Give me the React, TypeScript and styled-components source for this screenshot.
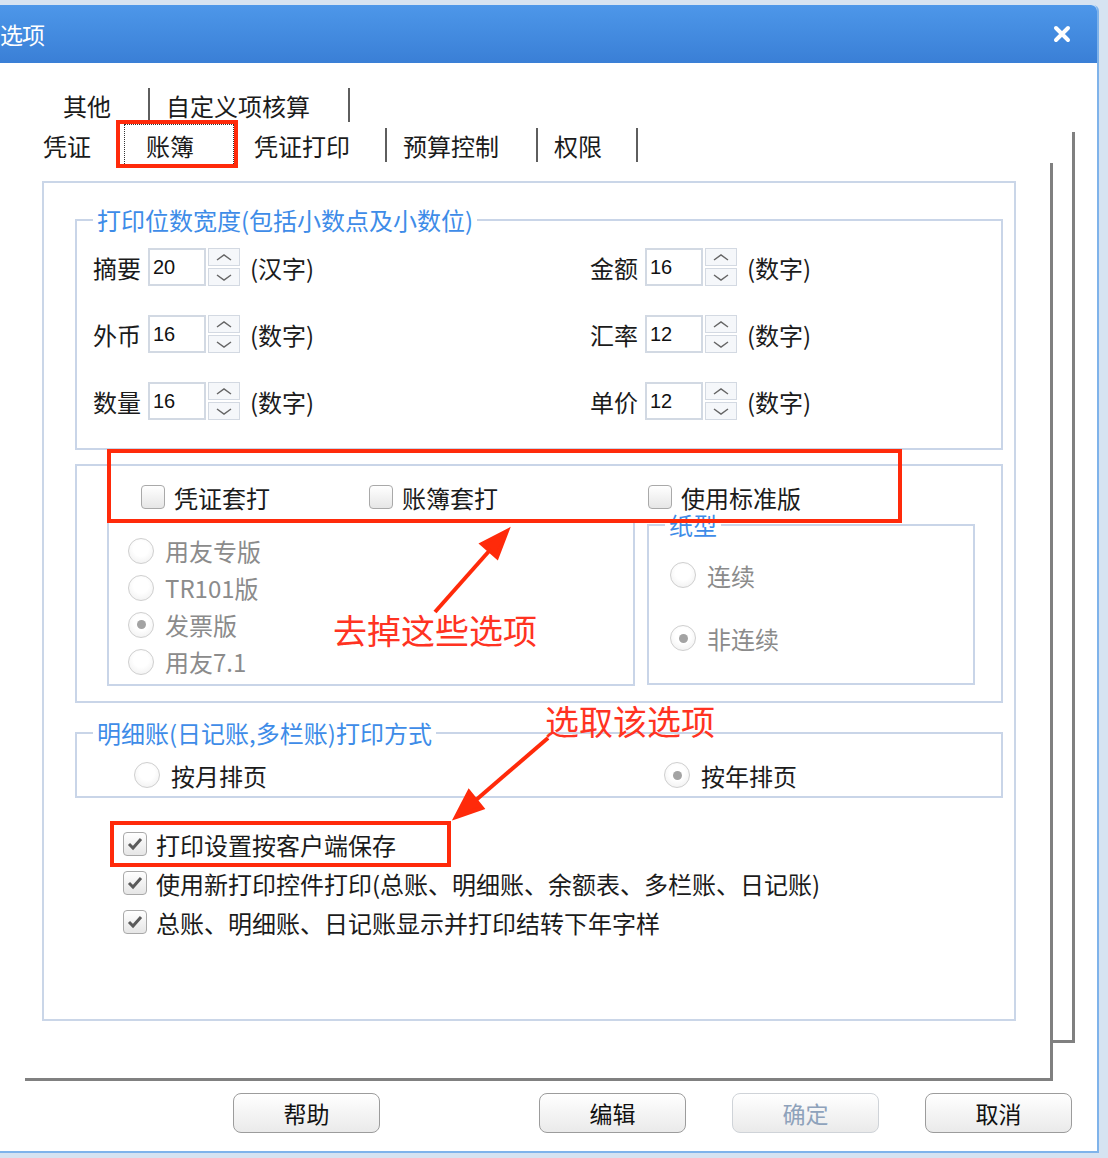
import React from 'react';
import styled, { createGlobalStyle } from 'styled-components';

const GlobalStyle = createGlobalStyle`
  html, body {
    margin: 0;
    padding: 0;
    background: #d6e3f1;
  }
  body {
    font-family: "Noto Sans CJK SC", "Noto Sans", sans-serif;
    color: #1b1b1b;
  }
  * { box-sizing: border-box; }
`;

const Page = styled.div`
  position: relative;
  width: 1108px;
  height: 1158px;
  padding-top: 5px;
  overflow: hidden;
`;

const Dialog = styled.div`
  width: 1099px;
  height: 1148px;
  background: #fff;
  border-right: 2px solid #7fb3ea;
  border-bottom: 2px solid #7fb3ea;
  border-top-right-radius: 6px;
  display: flex;
  flex-direction: column;
`;

const TitleBar = styled.div`
  flex: none;
  height: 58px;
  display: flex;
  align-items: center;
  justify-content: space-between;
  padding-right: 26px;
  background: linear-gradient(#4d97e9, #3a7fd6);
  border-top-right-radius: 6px;
  color: #fff;
  font-size: 23px;
`;

const Title = styled.span`
  margin-left: 0;
  letter-spacing: -1px;
`;

// ---- tabs ----

const TabRow = styled.div<{ $top: number; $left: number }>`
  display: flex;
  align-items: center;
  height: 34px;
  margin-top: ${p => p.$top}px;
  margin-left: ${p => p.$left}px;
  font-size: 24px;
`;

const Tab = styled.div<{ $pl: number; $pr: number; $sep?: boolean }>`
  height: 34px;
  display: flex;
  align-items: center;
  padding: 0 ${p => p.$pr}px 0 ${p => p.$pl}px;
  border-right: 2px solid ${p => (p.$sep ? '#5e5e5e' : 'transparent')};
  white-space: nowrap;
`;

const ActiveTab = styled.div`
  width: 122px;
  height: 48px;
  padding: 3px 6px;
  font-size: 24px;
`;

const FocusRect = styled.div`
  height: 100%;
  display: flex;
  align-items: center;
  padding-left: 21px;
  border: 1px dotted #333;
`;

const FrontFrame = styled.div`
  position: relative;
  width: 1028px;
  height: 918px;
  margin: 1px 0 0 25px;
  padding: 18px 0 0 17px;
  border-right: 3px solid #808080;
  border-bottom: 3px solid #808080;

  &::before {
    content: '';
    position: absolute;
    top: -31px;
    left: calc(100% + 3px);
    width: 19px;
    bottom: 35px;
    border-right: 3px solid #808080;
    border-bottom: 3px solid #808080;
  }
`;

const TabPage = styled.div`
  width: 974px;
  height: 840px;
  border: 2px solid #cad6e8;
  padding: 22px 11px 0 31px;
`;

// ---- group boxes ----

const GroupBox = styled.fieldset<{ $pt: number; $pb: number; $pl?: number; $mt?: number }>`
  margin: ${p => p.$mt ?? 0}px 0 0 0;
  min-width: 0;
  border: 2px solid #c9d5e8;
  padding: ${p => p.$pt}px 12px ${p => p.$pb}px ${p => p.$pl ?? 16}px;
`;

const Legend = styled.legend<{ $ml?: number }>`
  margin-left: ${p => p.$ml ?? 0}px;
  padding: 0 4px;
  font-size: 24px;
  line-height: 30px;
  color: #3e8ce8;
  white-space: nowrap;
`;

const FieldGrid = styled.div`
  display: grid;
  grid-template-columns: 497px 1fr;
  row-gap: 29px;
`;

const Field = styled.div`
  display: flex;
  align-items: center;
  height: 38px;
  font-size: 24px;
`;

const FieldLabel = styled.span`
  width: 48px;
  margin-right: 7px;
  white-space: nowrap;
`;

const NumBox = styled.div`
  width: 58px;
  height: 38px;
  border: 2px solid #d2d9e3;
  padding-left: 3px;
  display: flex;
  align-items: center;
  font-family: "Liberation Sans", Arial, sans-serif;
  font-size: 20px;
  color: #111;
`;

const Spin = styled.div`
  display: flex;
  flex-direction: column;
  gap: 2px;
  width: 32px;
  height: 38px;
  margin-left: 2px;
`;

const SpinHalf = styled.div`
  flex: 1;
  display: flex;
  align-items: center;
  justify-content: center;
  border: 1px solid #d3d9e2;
  background: #f5f7fa;
`;

const Unit = styled.span`
  margin-left: 10px;
  white-space: nowrap;
`;

// ---- options ----

const CheckRow = styled.div`
  display: grid;
  grid-template-columns: 228px 279px auto;
  margin-left: 34px;
  height: 26px;
  align-items: center;
`;

const Option = styled.label<{ $muted?: boolean }>`
  display: flex;
  align-items: center;
  height: 30px;
  font-size: 24px;
  white-space: nowrap;
  color: ${p => (p.$muted ? '#8b8b8b' : '#1b1b1b')};
`;

const Box = styled.span`
  flex: none;
  width: 24px;
  height: 24px;
  margin-right: 9px;
  border: 1.5px solid #a9a9a9;
  border-radius: 4px;
  background: linear-gradient(#ffffff, #e6e6e6);
  display: flex;
  align-items: center;
  justify-content: center;
`;

const Circle = styled.span`
  flex: none;
  width: 26px;
  height: 26px;
  margin-right: 11px;
  border-radius: 50%;
  border: 1.5px solid #cfcfcf;
  background: radial-gradient(circle at 50% 40%, #ffffff 40%, #ececec);
  display: flex;
  align-items: center;
  justify-content: center;
`;

const Dot = styled.span`
  width: 9px;
  height: 9px;
  border-radius: 50%;
  background: #a3a3a3;
`;

const SubRow = styled.div`
  display: flex;
  align-items: flex-start;
  margin-top: 2px;
`;

const VersionBox = styled.div`
  width: 528px;
  height: 166px;
  margin-top: 10px;
  border: 2px solid #c9d5e8;
  padding: 10px 0 0 19px;
  display: grid;
  grid-auto-rows: 37px;
  align-items: center;
`;

const PaperBox = styled.fieldset`
  width: 328px;
  height: 175px;
  margin: 0 0 0 12px;
  min-width: 0;
  border: 2px solid #c9d5e8;
  padding: 20px 12px 0 21px;
  display: flex;
  flex-direction: column;
  gap: 33px;
`;

const PageModeRow = styled.div`
  display: grid;
  grid-template-columns: 530px auto;
  margin-left: 41px;
`;

const CheckList = styled.div`
  display: flex;
  flex-direction: column;
  gap: 9px;
  margin: 31px 0 0 48px;
`;

// ---- buttons ----

const ButtonRow = styled.div`
  display: flex;
  gap: 46px;
  margin-top: 12px;
  padding: 0 25px 0 233px;
`;

const Button = styled.button<{ $disabled?: boolean }>`
  width: 147px;
  height: 40px;
  padding: 0;
  border: 1.5px solid ${p => (p.$disabled ? '#cfd3d8' : '#9c9c9c')};
  border-radius: 8px;
  background: linear-gradient(#ffffff, #eaeaea);
  font-family: inherit;
  font-size: 23px;
  color: ${p => (p.$disabled ? '#8ea2bb' : '#111')};

  &:first-child {
    margin-right: auto;
  }
`;

// ---- annotations (overlay) ----

const Mark = styled.div<{ $x: number; $y: number; $w: number; $h: number }>`
  position: absolute;
  left: ${p => p.$x}px;
  top: ${p => p.$y}px;
  width: ${p => p.$w}px;
  height: ${p => p.$h}px;
  border: 4px solid #ff2a0a;
  pointer-events: none;
`;

const Note = styled.div<{ $x: number; $y: number }>`
  position: absolute;
  left: ${p => p.$x}px;
  top: ${p => p.$y}px;
  font-size: 34px;
  line-height: 38px;
  color: #ff3322;
  white-space: nowrap;
`;

const ArrowLayer = styled.svg`
  position: absolute;
  left: 0;
  top: 0;
  pointer-events: none;
`;

const Chevron: React.FC<{ down?: boolean }> = ({ down }) => (
  <svg width="18" height="9" viewBox="0 0 18 9">
    <polyline
      points={down ? '2,2 9,7 16,2' : '2,7 9,2 16,7'}
      fill="none"
      stroke="#666"
      strokeWidth="1.5"
    />
  </svg>
);

const Check: React.FC = () => (
  <svg width="16" height="14" viewBox="0 0 16 14">
    <polyline points="2,7 6,11 14,2" fill="none" stroke="#5b5b5b" strokeWidth="3" />
  </svg>
);

const NumField: React.FC<{ label: string; value: string; unit: string }> = ({ label, value, unit }) => (
  <Field>
    <FieldLabel>{label}</FieldLabel>
    <NumBox>{value}</NumBox>
    <Spin>
      <SpinHalf><Chevron /></SpinHalf>
      <SpinHalf><Chevron down /></SpinHalf>
    </Spin>
    <Unit>{unit}</Unit>
  </Field>
);

const CheckOption: React.FC<{ label: string; checked?: boolean }> = ({ label, checked }) => (
  <Option>
    <Box>{checked && <Check />}</Box>
    {label}
  </Option>
);

const RadioOption: React.FC<{ label: string; checked?: boolean; muted?: boolean }> = ({ label, checked, muted }) => (
  <Option $muted={muted}>
    <Circle>{checked && <Dot />}</Circle>
    {label}
  </Option>
);

const fields = [
  ['摘要', '20', '(汉字)'],
  ['金额', '16', '(数字)'],
  ['外币', '16', '(数字)'],
  ['汇率', '12', '(数字)'],
  ['数量', '16', '(数字)'],
  ['单价', '12', '(数字)'],
];

const App: React.FC = () => {
  return (
    <Page>
      <GlobalStyle />
      <Dialog>
        <TitleBar>
          <Title>选项</Title>
          <svg width="18" height="18" viewBox="0 0 18 18">
            <path d="M3 3 L15 15 M15 3 L3 15" stroke="#fff" strokeWidth="4" strokeLinecap="round" />
          </svg>
        </TitleBar>

        <TabRow $top={25} $left={45}>
          <Tab $pl={18} $pr={37} $sep>其他</Tab>
          <Tab $pl={16} $pr={38} $sep>自定义项核算</Tab>
        </TabRow>
        <TabRow $top={6} $left={25}>
          <Tab $pl={18} $pr={25}>凭证</Tab>
          <ActiveTab>
            <FocusRect>账簿</FocusRect>
          </ActiveTab>
          <Tab $pl={14} $pr={35} $sep>凭证打印</Tab>
          <Tab $pl={16} $pr={37} $sep>预算控制</Tab>
          <Tab $pl={16} $pr={34} $sep>权限</Tab>
        </TabRow>

        <FrontFrame>
          <TabPage>
            <GroupBox $pt={13} $pb={28}>
              <Legend>打印位数宽度(包括小数点及小数位)</Legend>
              <FieldGrid>
                {fields.map(([l, v, u]) => (
                  <NumField key={l} label={l} value={v} unit={u} />
                ))}
              </FieldGrid>
            </GroupBox>

            <GroupBox $mt={14} $pt={16} $pb={15} $pl={30}>
              <CheckRow>
                <CheckOption label="凭证套打" />
                <CheckOption label="账簿套打" />
                <CheckOption label="使用标准版" />
              </CheckRow>
              <SubRow>
                <VersionBox>
                  <RadioOption muted label="用友专版" />
                  <RadioOption muted label="TR101版" />
                  <RadioOption muted checked label="发票版" />
                  <RadioOption muted label="用友7.1" />
                </VersionBox>
                <PaperBox>
                  <Legend $ml={-5}>纸型</Legend>
                  <RadioOption muted label="连续" />
                  <RadioOption muted checked label="非连续" />
                </PaperBox>
              </SubRow>
            </GroupBox>

            <GroupBox $mt={15} $pt={12} $pb={6}>
              <Legend>明细账(日记账,多栏账)打印方式</Legend>
              <PageModeRow>
                <RadioOption label="按月排页" />
                <RadioOption checked label="按年排页" />
              </PageModeRow>
            </GroupBox>

            <CheckList>
              <CheckOption checked label="打印设置按客户端保存" />
              <CheckOption checked label="使用新打印控件打印(总账、明细账、余额表、多栏账、日记账)" />
              <CheckOption checked label="总账、明细账、日记账显示并打印结转下年字样" />
            </CheckList>
          </TabPage>
        </FrontFrame>

        <ButtonRow>
          <Button>帮助</Button>
          <Button>编辑</Button>
          <Button $disabled>确定</Button>
          <Button>取消</Button>
        </ButtonRow>
      </Dialog>

      <Mark $x={116} $y={120} $w={122} $h={48} />
      <Mark $x={107} $y={449} $w={795} $h={74} />
      <Mark $x={110} $y={821} $w={341} $h={46} />

      <Note $x={333} $y={611}>去掉这些选项</Note>
      <Note $x={545} $y={702}>选取该选项</Note>

      <ArrowLayer width="1108" height="1158" viewBox="0 0 1108 1158">
        <g stroke="#ff2a0a" strokeWidth="4" fill="#ff2a0a">
          <line x1="435" y1="612" x2="490" y2="550" />
          <polygon points="507,531 497,557 482,544" />
          <line x1="548" y1="738" x2="476" y2="800" />
          <polygon points="456,817 482,808 469,792" />
        </g>
      </ArrowLayer>
    </Page>
  );
};

export default App;
